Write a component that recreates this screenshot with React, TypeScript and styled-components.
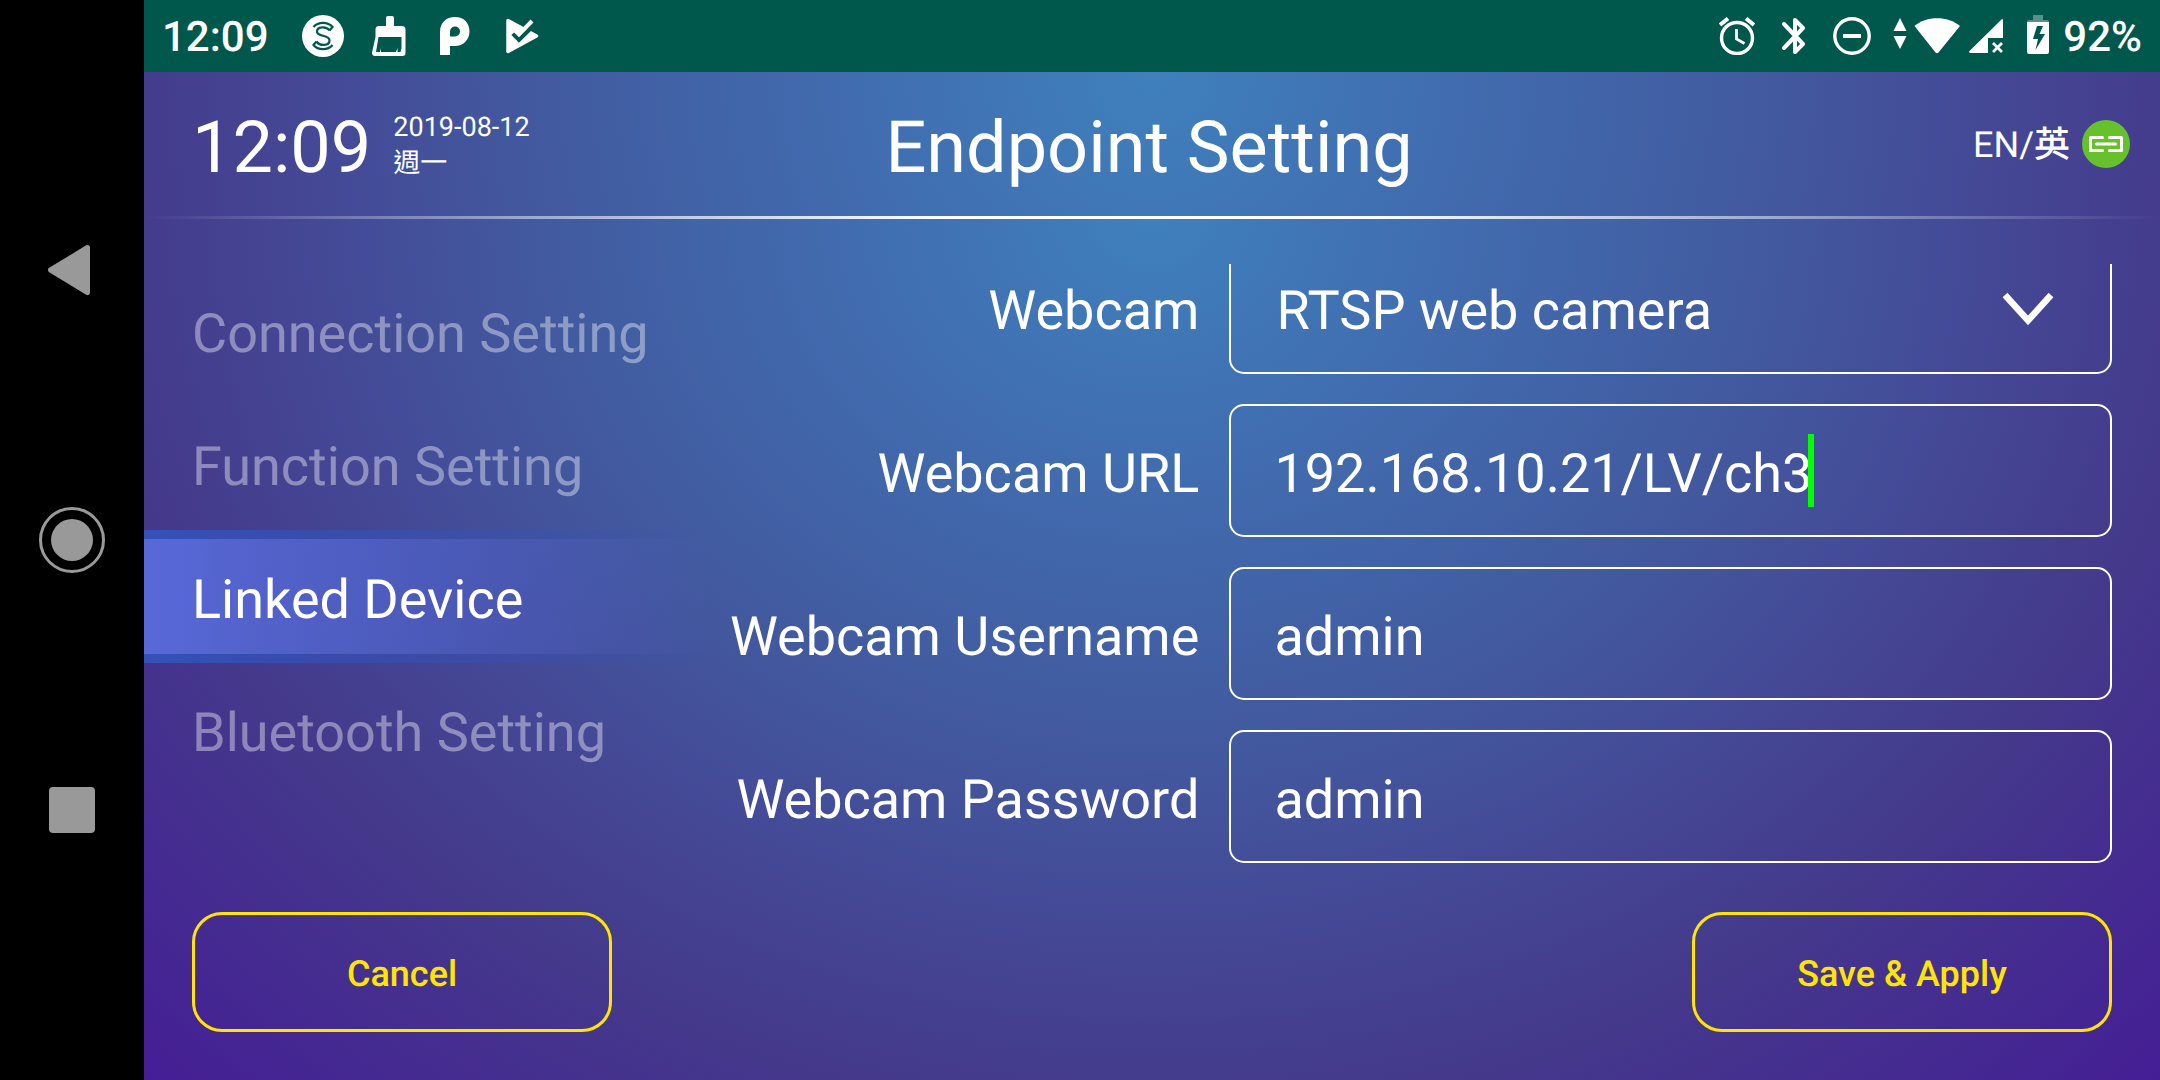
import React from 'react';
import styled, { createGlobalStyle } from 'styled-components';

const GlobalStyle = createGlobalStyle`
  *, *::before, *::after { box-sizing: border-box; }
  html, body, #root { height: 100%; }
  body {
    margin: 0;
    background: #000;
    text-rendering: geometricPrecision;
  }
  body, button, input, select {
    font-family: Roboto, "Noto Sans CJK TC", sans-serif;
  }
  button, input, select { text-rendering: inherit; }
`;

const STOPS = `
  #3f80bd 0,
  #416bae 22%,
  #42599f 42%,
  #444a97 55%,
  #443a8b 70%,
  #442c90 83%,
  #451a96 100%
`;

const Device = styled.div`
  display: flex;
  min-height: 100%;
  color: #fff;
`;

const SystemNav = styled.nav`
  flex: none;
  width: 144px;
  display: flex;
  flex-direction: column;
  align-items: center;
  padding: 135px 0;
  background: #000;
`;

const NavButton = styled.button`
  flex: 1;
  width: 100%;
  padding: 0;
  border: 0;
  background: none;
  display: grid;
  place-items: center;
  cursor: pointer;
`;

const Screen = styled.div`
  flex: 1;
  min-width: 0;
  display: flex;
  flex-direction: column;
`;

const StatusBar = styled.div`
  height: 72px;
  padding: 0 18px;
  display: flex;
  align-items: center;
  justify-content: space-between;
  background: #00574b;
  font-size: 42px;
  font-weight: 500;
  line-height: 68px;
`;

const StatusGroup = styled.div<{ $gap: number }>`
  display: flex;
  align-items: center;
  gap: ${(p) => p.$gap}px;
`;

const StatusText = styled.span`
  padding-top: 4px;
`;

const Panel = styled.main`
  flex: 1;
  display: flex;
  flex-direction: column;
`;

const Header = styled.header`
  height: 144px;
  padding: 0 30px 0 24px;
  display: grid;
  grid-template-columns: 1fr auto 1fr;
  align-items: center;
  background: radial-gradient(circle 1480px at 50% 0, ${STOPS});
`;

const Clock = styled.div`
  padding-left: 24px;
  display: flex;
  align-items: center;
  gap: 22px;
`;

const Time = styled.time`
  padding-top: 8px;
  font-size: 72px;
  line-height: 84px;
`;

const DateBlock = styled.div`
  padding-top: 2px;
  font-size: 27px;
  line-height: 36px;
`;

const Title = styled.h1`
  margin: 0;
  padding-top: 8px;
  font-size: 72px;
  font-weight: 400;
  line-height: 84px;
`;

const Tools = styled.div`
  display: flex;
  align-items: center;
  justify-content: flex-end;
  gap: 12px;
`;

const LanguageButton = styled.button`
  padding: 2px 0 0;
  border: 0;
  background: none;
  color: inherit;
  font-size: 36px;
  line-height: 48px;
  cursor: pointer;
`;

const Han = styled.span`
  font-weight: 500;
`;

const Content = styled.div`
  flex: 1;
  display: flex;
  flex-direction: column;
  background: radial-gradient(1480px 1264px at 50% 0, ${STOPS});
`;

const Divider = styled.hr`
  width: 100%;
  height: 3px;
  margin: 0;
  border: 0;
  background: linear-gradient(90deg, transparent, #fff 40%, #fff 60%, transparent);
`;

const Body = styled.div`
  flex: 1;
  padding-top: 45px;
  display: flex;
`;

const Menu = styled.nav`
  flex: none;
  width: 567px;
  display: flex;
  flex-direction: column;
`;

const MenuItem = styled.a<{ $active?: boolean }>`
  height: 133px;
  padding: 8px 0 0 48px;
  display: flex;
  align-items: center;
  color: ${(p) => (p.$active ? '#fff' : 'rgba(255, 255, 255, 0.4)')};
  font-size: 54px;
  line-height: 64px;
  white-space: nowrap;
  text-decoration: none;
  background: ${(p) =>
    p.$active
      ? `linear-gradient(90deg, #5869d8, rgba(78, 98, 200, 0.72) 50%, rgba(72, 92, 180, 0)) 0 9px / 100% 115px no-repeat,
         linear-gradient(90deg, #3352b8, rgba(51, 82, 184, 0)) 0 0 / 100% 9px no-repeat,
         linear-gradient(90deg, #3352b8, rgba(51, 82, 184, 0)) 0 100% / 100% 9px no-repeat`
      : 'none'};
`;

const Form = styled.form`
  flex: 1;
  min-width: 0;
  height: 599px;
  padding-right: 48px;
  display: flex;
  flex-direction: column;
  justify-content: flex-end;
  gap: 30px;
  overflow: hidden;
`;

const Row = styled.div`
  flex: none;
  display: flex;
  align-items: center;
  gap: 30px;
`;

const Label = styled.label`
  flex: 1;
  padding-top: 8px;
  font-size: 54px;
  line-height: 64px;
  text-align: right;
  white-space: nowrap;
`;

const Box = styled.div`
  flex: none;
  width: 63%;
  height: 133px;
  padding: 0 56px 0 43px;
  display: flex;
  align-items: center;
  border: 2px solid #fff;
  border-radius: 15px;
`;

const TextInput = styled.input<{ $hug?: boolean }>`
  ${(p) => (p.$hug ? 'field-sizing: content;' : 'flex: 1; min-width: 0;')}
  height: 100%;
  padding: 8px 0 0;
  border: 0;
  outline: 0;
  background: none;
  color: #fff;
  font-size: 54px;
`;

const Caret = styled.span`
  width: 6px;
  height: 73px;
  margin-left: -4px;
  background: #0f0;
`;

const Select = styled.select`
  flex: 1;
  min-width: 0;
  height: 100%;
  padding: 8px 0 0 2px;
  border: 0;
  outline: 0;
  appearance: none;
  background: none;
  color: #fff;
  font-size: 54px;
`;

const Footer = styled.footer`
  padding: 49px 48px 48px;
  display: flex;
  justify-content: space-between;
`;

const ActionButton = styled.button`
  width: 420px;
  height: 120px;
  padding: 4px 0 0;
  border: 3px solid #ffe600;
  border-radius: 30px;
  background: none;
  color: #ffe600;
  font-size: 36px;
  font-weight: 500;
  cursor: pointer;
`;

const MENU = ['Connection Setting', 'Function Setting', 'Linked Device', 'Bluetooth Setting'];

const CoinIcon = () => (
  <svg width="42" height="42" viewBox="0 0 42 42" fill="none">
    <circle cx="21" cy="21" r="21" fill="#fff" />
    <g stroke="#00574b" strokeWidth="2.2">
      <path d="M11.500 12C16 6.500 26 6.500 30.500 12L27.500 15.500" />
      <path d="M27.500 15.500C24.500 11 15 11.500 15 16.500C15 22.500 27.500 19 27.500 25.500C27.500 31 18 31.500 14.500 26.500" />
      <path d="M14.500 26.500L11.500 30C16 35.500 26 35.500 30.500 30" />
    </g>
  </svg>
);

const BroomIcon = () => (
  <svg width="42" height="40" viewBox="-4 0 42 40" fill="#fff">
    <path fillRule="evenodd" d="M14 2a2 2 0 0 1 2-2h4a2 2 0 0 1 2 2v8h8a3.500 3.500 0 0 1 3.500 3.500V37a3 3 0 0 1-3 3H3a3 3 0 0 1-3-3.500L3.500 21V13.500A3.500 3.500 0 0 1 7 10h7zM6.500 21L4 36h4l1-4v4h15l1.500-4v4h3l1-4V21z" />
  </svg>
);

const PIcon = () => (
  <svg width="42" height="38" viewBox="-6 0 42 38" fill="#fff">
    <path fillRule="evenodd" d="M0 15C0 6 6 0 15 0s14.500 6 14.500 14.500S23 29 15 29h-5v9H0zM10 19.500h5a5 5 0 1 0-5-5z" />
  </svg>
);

const PlayCheckIcon = () => (
  <svg width="42" height="36" viewBox="-6 0 42 36">
    <path d="M2 2.500L30.500 18L2 33.500z" fill="#fff" stroke="#fff" strokeWidth="3.500" strokeLinejoin="round" />
    <path d="M7 15.500L13 21.500L29 6" fill="none" stroke="#00574b" strokeWidth="4.500" />
    <path d="M9 12.500L13 16.500L26 3" fill="none" stroke="#fff" strokeWidth="4" />
  </svg>
);

const AlarmIcon = () => (
  <svg width="36" height="38" viewBox="0 0 36 38" fill="none" stroke="#fff" strokeWidth="3.400">
    <circle cx="18" cy="21" r="15.500" />
    <path d="M17.500 12v10l8 4.500" strokeWidth="2.800" />
    <path d="M1 8L9 1.500M35 8L27 1.500" strokeWidth="4" />
  </svg>
);

const BluetoothIcon = () => (
  <svg width="34" height="38" viewBox="-5 0 34 38" fill="none" stroke="#fff" strokeWidth="4" strokeLinejoin="round" strokeLinecap="round">
    <path d="M2 7L21 27L13 35V3L21 11L2 31" />
  </svg>
);

const DndIcon = () => (
  <svg width="38" height="38" viewBox="0 0 38 38" fill="none" stroke="#fff">
    <circle cx="19" cy="19" r="17.200" strokeWidth="3.400" />
    <path d="M10 19h18" strokeWidth="4" />
  </svg>
);

const WifiIcon = () => (
  <svg width="68" height="36" viewBox="0 0 68 36" fill="#fff">
    <path d="M0.500 13L7 0l6.500 13zM0.500 18L7 31l6.500-13z" />
    <path d="M21.500 8C33-2.500 55-2.500 67 8L45.500 34.500Q44 36 42.500 34.500z" />
  </svg>
);

const SignalIcon = () => (
  <svg width="36" height="34" viewBox="0 0 36 34" fill="#fff">
    <path d="M33 0a1 1 0 0 1 1 1V19H19V34H1Q-.5 33.500.5 32z" />
    <path d="M24 24l9 9M33 24l-9 9" stroke="#fff" strokeWidth="2.800" />
  </svg>
);

const BatteryIcon = () => (
  <svg width="22" height="42" viewBox="0 0 22 42">
    <path d="M6 0h10v5h4q2 0 2 2H0q0-2 2-2h4z" fill="#fff" fillOpacity=".35" />
    <path fillRule="evenodd" d="M0 7h22v30a2 2 0 0 1-2 2H2a2 2 0 0 1-2-2zM10 11L6 24h5L8.500 35L18 19h-5.500L16 11z" fill="#fff" />
  </svg>
);

const LinkIcon = () => (
  <svg width="48" height="48" viewBox="0 0 48 48" fill="none">
    <circle cx="24" cy="24" r="24" fill="#67c12c" />
    <path d="M20.500 17.500H8.500V30.500H20.500M27.500 17.500H39.500V30.500H27.500M14.500 24H33.500" stroke="#fff" strokeWidth="3" strokeLinecap="round" strokeLinejoin="round" />
  </svg>
);

const ChevronIcon = () => (
  <svg width="52" height="38" viewBox="0 0 52 38" fill="none" stroke="#fff" strokeWidth="6.500">
    <path d="M3 6L26 31.500L49 6" />
  </svg>
);

export default function App() {
  return (
    <>
      <GlobalStyle />
      <Device>
        <SystemNav aria-label="System">
          <NavButton aria-label="Back">
            <svg width="48" height="52" viewBox="0 0 48 52">
              <path d="M39.500 3.500L2.500 26L39.500 48.500z" fill="#999" stroke="#999" strokeWidth="5" strokeLinejoin="round" />
            </svg>
          </NavButton>
          <NavButton aria-label="Home">
            <svg width="66" height="66" viewBox="0 0 66 66">
              <circle cx="33" cy="33" r="31.500" fill="none" stroke="#999" strokeWidth="3" />
              <circle cx="33" cy="33" r="21" fill="#999" />
            </svg>
          </NavButton>
          <NavButton aria-label="Recent apps">
            <svg width="46" height="46" viewBox="0 0 46 46">
              <rect width="46" height="46" rx="4" fill="#999" />
            </svg>
          </NavButton>
        </SystemNav>

        <Screen>
          <StatusBar>
            <StatusGroup $gap={33}>
              <StatusText>12:09</StatusText>
              <StatusGroup $gap={24}>
                <CoinIcon />
                <BroomIcon />
                <PIcon />
                <PlayCheckIcon />
              </StatusGroup>
            </StatusGroup>
            <StatusGroup $gap={14}>
              <StatusGroup $gap={22}>
                <AlarmIcon />
                <BluetoothIcon />
                <DndIcon />
                <StatusGroup $gap={8}>
                  <WifiIcon />
                  <SignalIcon />
                </StatusGroup>
                <BatteryIcon />
              </StatusGroup>
              <StatusText>92%</StatusText>
            </StatusGroup>
          </StatusBar>

          <Panel>
            <Header>
              <Clock>
                <Time>12:09</Time>
                <DateBlock>
                  <div>2019-08-12</div>
                  <div>週一</div>
                </DateBlock>
              </Clock>
              <Title>Endpoint Setting</Title>
              <Tools>
                <LanguageButton>
                  EN/<Han>英</Han>
                </LanguageButton>
                <LinkIcon />
              </Tools>
            </Header>

            <Content>
              <Divider />
              <Body>
                <Menu aria-label="Settings">
                  {MENU.map((name) => (
                    <MenuItem key={name} href="#" $active={name === 'Linked Device'}>
                      {name}
                    </MenuItem>
                  ))}
                </Menu>
                <Form id="linked-device">
                  <Row>
                    <Label htmlFor="webcam">Webcam</Label>
                    <Box>
                      <Select id="webcam">
                        <option>RTSP web camera</option>
                      </Select>
                      <ChevronIcon />
                    </Box>
                  </Row>
                  <Row>
                    <Label htmlFor="url">Webcam URL</Label>
                    <Box>
                      <TextInput id="url" $hug defaultValue="192.168.10.21/LV/ch3" />
                      <Caret />
                    </Box>
                  </Row>
                  <Row>
                    <Label htmlFor="username">Webcam Username</Label>
                    <Box>
                      <TextInput id="username" defaultValue="admin" />
                    </Box>
                  </Row>
                  <Row>
                    <Label htmlFor="password">Webcam Password</Label>
                    <Box>
                      <TextInput id="password" defaultValue="admin" />
                    </Box>
                  </Row>
                </Form>
              </Body>

              <Footer>
                <ActionButton type="button">Cancel</ActionButton>
                <ActionButton type="submit" form="linked-device">
                  Save &amp; Apply
                </ActionButton>
              </Footer>
            </Content>
          </Panel>
        </Screen>
      </Device>
    </>
  );
}
